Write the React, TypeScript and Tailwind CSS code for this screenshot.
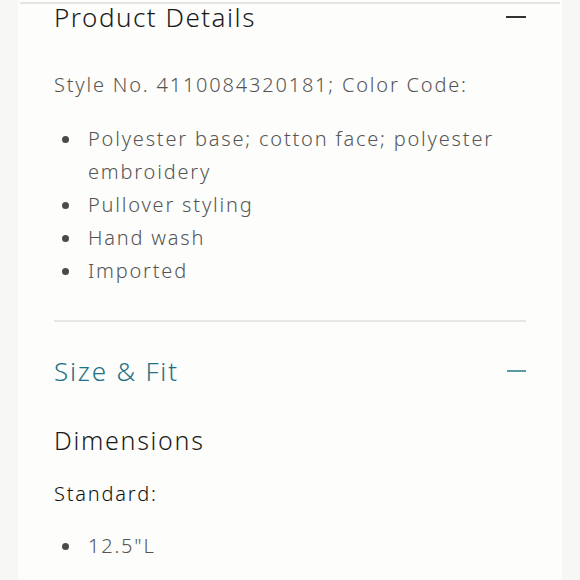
import React from "react";

const font = { fontFamily: "'Noto Sans', Lato, sans-serif" };

function Bullet({ children }: { children: React.ReactNode }) {
  return (
    <li className="flex">
      <span className="w-[34px] shrink-0 flex pt-[14px] pl-[8px]">
        <span className="block w-[7px] h-[7px] rounded-full bg-[#4a4a4a]" />
      </span>
      <span>{children}</span>
    </li>
  );
}

export default function App() {
  return (
    <div className="w-[580px] h-[580px] overflow-hidden bg-[#f7f7f5] flex justify-center" style={font}>
      <div className="w-[544px] h-full bg-[#fdfdfb] flex flex-col">
        <div className="mx-[2px] mt-[2px] h-[2px] bg-[#e6e5e1]" />
        <div className="px-[36px]">
          <div className="flex items-center justify-between h-[26px]">
            <h2 className="text-[26px] leading-none text-[#1a1a1a] font-light tracking-[1.5px]">Product Details</h2>
            <span className="block w-[20px] h-[2px] bg-[#333]" />
          </div>
          <p className="mt-[43px] text-[20px] leading-[24px] text-[#555] font-light tracking-[1.8px]">
            Style No. 4110084320181; Color Code:
          </p>
          <ul className="mt-[25px] text-[20px] leading-[33px] text-[#555] font-light tracking-[1.8px]">
            <Bullet>Polyester base; cotton face; polyester embroidery</Bullet>
            <Bullet>Pullover styling</Bullet>
            <Bullet>Hand wash</Bullet>
            <Bullet>Imported</Bullet>
          </ul>
          <div className="mt-[33px] h-[2px] bg-[#e8e7e3]" />
          <div className="flex items-center justify-between mt-[36px] h-[26px]">
            <h2 className="text-[26px] leading-none text-[#1f7385] font-light tracking-[1.8px]">Size &amp; Fit</h2>
            <span className="block w-[19px] h-[2px] bg-[#5a9aa6]" />
          </div>
          <h3 className="mt-[44px] text-[25px] leading-none text-[#1a1a1a] font-light tracking-[1.7px]">Dimensions</h3>
          <p className="mt-[31px] text-[20px] leading-none text-[#111] font-light tracking-[1.8px]">Standard:</p>
          <ul className="mt-[25px] text-[20px] leading-[33px] text-[#555] font-light tracking-[1.8px]">
            <Bullet>12.5"L</Bullet>
          </ul>
        </div>
      </div>
    </div>
  );
}
